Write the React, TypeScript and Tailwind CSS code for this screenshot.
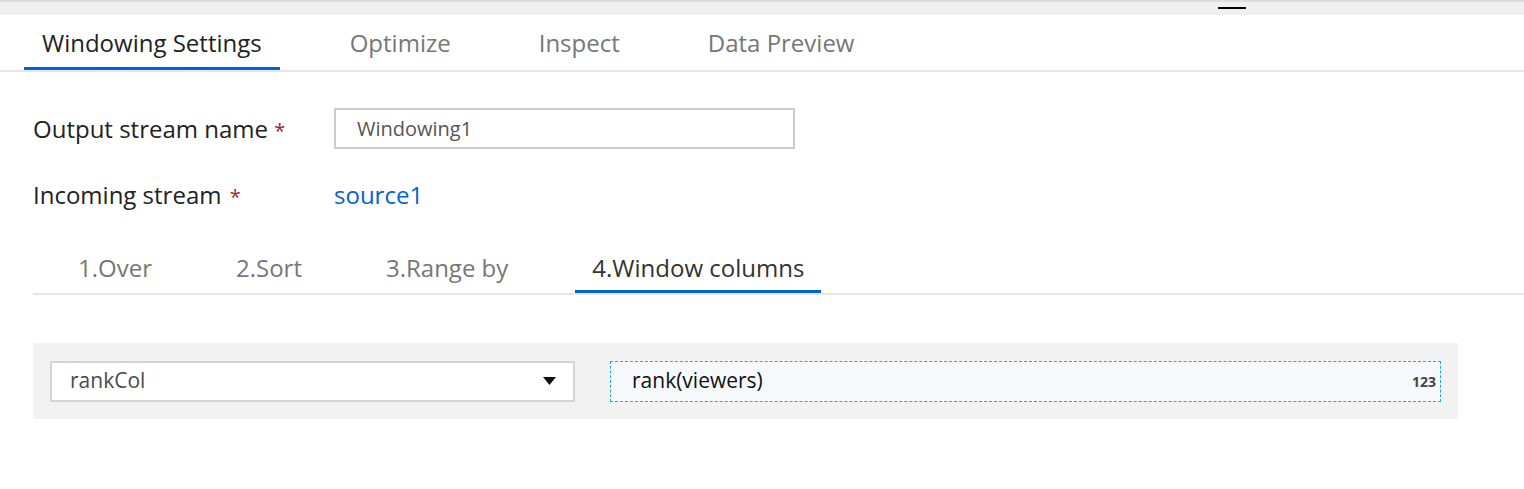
import { useState } from 'react';

const mainTabs = ['Windowing Settings', 'Optimize', 'Inspect', 'Data Preview'];
const stepTabs = ['1.Over', '2.Sort', '3.Range by', '4.Window columns'];

export default function App() {
    const [tab, setTab] = useState(0);
    const [step, setStep] = useState(3);

    return (
        <div className="min-h-[489px] w-full bg-white text-[#222]" style={{ fontFamily: '"Open Sans", "Noto Sans", sans-serif' }}>
            {/* title strip */}
            <div className="relative h-[15px] border-t-2 border-[#dcdcdc] bg-[#f0f0f0]">
                <div className="absolute left-[1218px] top-[5px] h-[2px] w-[28px] bg-black" />
            </div>

            {/* main tabs */}
            <div className="flex gap-[52px] border-b-2 border-[#e6e6e6] pl-[24px]">
                {mainTabs.map((t, i) => (
                    <button
                        key={t}
                        onClick={() => setTab(i)}
                        className={`border-b-[3px] px-[18px] pt-[13px] pb-[9px] text-[24px] leading-[30px] ${
                            tab === i ? 'border-[#0062d6] text-[#222]' : 'border-transparent text-[#777]'
                        }`}
                    >
                        {t}
                    </button>
                ))}
            </div>

            {/* form */}
            <div className="pl-[33px]">
                <div className="mt-[36px] flex items-center">
                    <div className="h-[30px] w-[301px] text-[24px] leading-[30px]">
                        Output stream name <span className="text-[20px] leading-none text-[#a4262c]">*</span>
                    </div>
                    <div className="flex h-[41px] w-[461px] items-center border-2 border-[#cccccc] pl-[21px] text-[20px] text-[#555]">
                        Windowing1
                    </div>
                </div>
                <div className="mt-[31px] flex items-center">
                    <div className="h-[30px] w-[301px] text-[24px] leading-[30px]">
                        Incoming stream <span className="ml-[2px] text-[20px] leading-none text-[#a4262c]">*</span>
                    </div>
                    <a className="cursor-pointer text-[24px] leading-[30px] text-[#0062d6]">source1</a>
                </div>

                {/* step tabs */}
                <div className="mt-[43px] flex gap-[50px] border-b-2 border-[#e6e6e6] pl-[28px]">
                    {stepTabs.map((t, i) => (
                        <button
                            key={t}
                            onClick={() => setStep(i)}
                            className={`border-b-[3px] px-[17px] pb-[7px] text-[24px] leading-[30px] ${
                                step === i ? 'border-[#0062d6] text-[#333]' : 'border-transparent text-[#777]'
                            }`}
                        >
                            {t}
                        </button>
                    ))}
                </div>

                {/* window column row */}
                <div className="mt-[48px] flex h-[76px] w-[1425px] items-center gap-[35px] bg-[#f2f2f2] px-[17px]">
                    <div className="flex h-[41px] w-[525px] items-center justify-between border-2 border-[#d4d4d4] bg-white pl-[18px] pr-[17px] text-[21px] text-[#4a4a4a]">
                        <span>rankCol</span>
                        <svg width="13" height="8" viewBox="0 0 13 8">
                            <path d="M0 0H13L6.5 8Z" fill="#111" />
                        </svg>
                    </div>
                    <div className="flex h-[41px] w-[831px] items-center justify-between border border-dashed border-[#1fa8e0] bg-[#f5f9fc] pl-[21px] pr-[4px]">
                        <span className="text-[21px] text-[#111]">rank(viewers)</span>
                        <span className="text-[14px] font-bold text-[#444]">123</span>
                    </div>
                </div>
            </div>
        </div>
    );
}
